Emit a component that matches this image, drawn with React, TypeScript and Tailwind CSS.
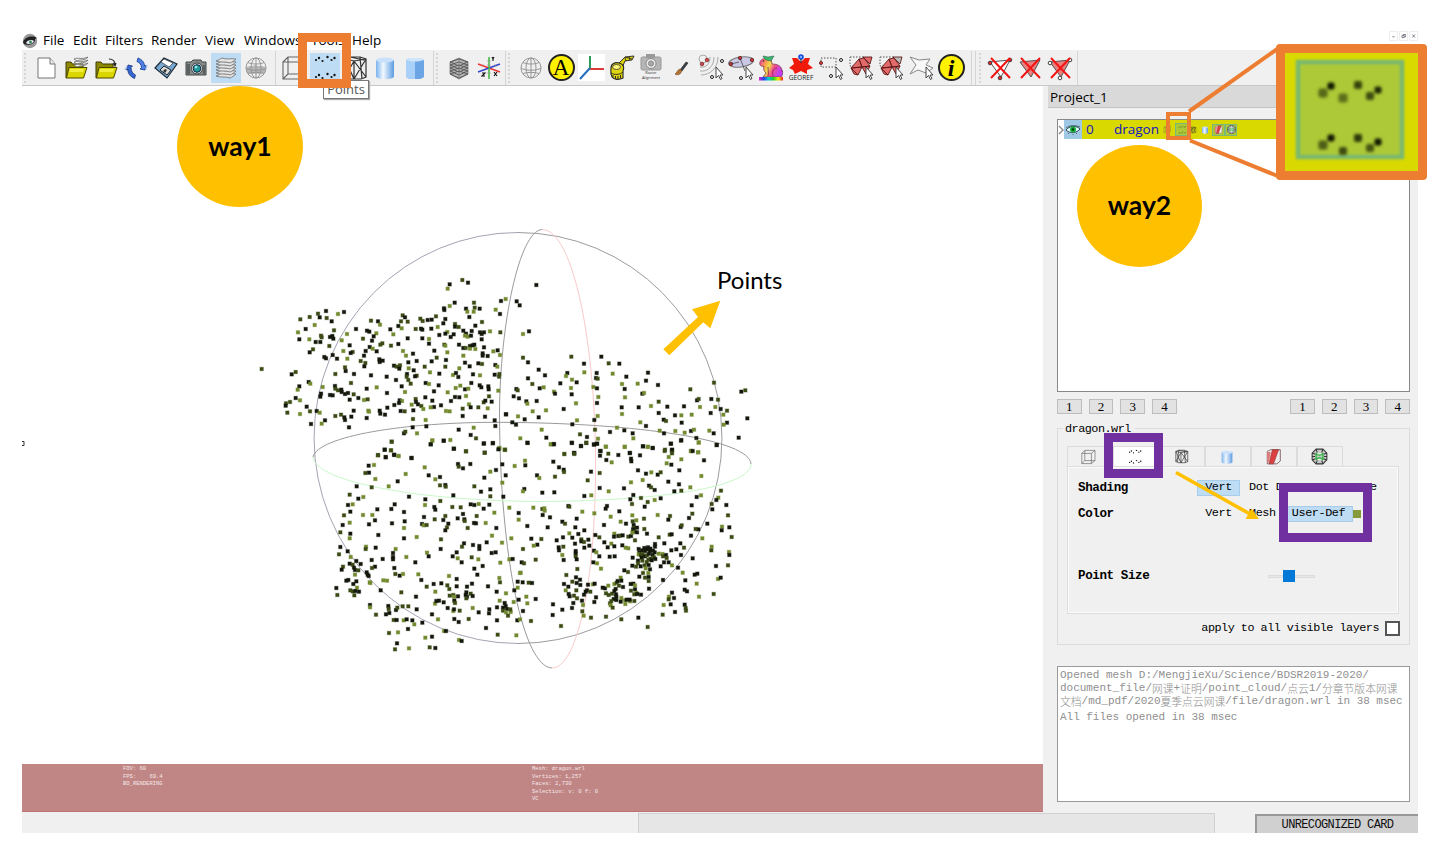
import React from "react";

const MONO = "font-['Liberation_Mono','Noto_Sans_CJK_SC',monospace]";
const UI = "font-['Open_Sans','Noto_Sans',sans-serif]";

/* ---------- point cloud ---------- */

type Patch = { x: number; y: number; pts: string };

// Every patch holds "x,y,shade" samples at a third of a pixel, relative to its corner.
const patches: Patch[] = [
  {
    x: 250,
    y: 220,
    pts: `637,180,1;599,193,0;654,188,0;593,206,2;614,248,0;599,258,2;582,265,0;583,270,0;672,248,1;648,266,0;674,263,1;689,266,0;652,275,2;671,275,2;753,243,0;767,237,2;737,269,2;750,282,0;658,291,0;
228,273,0;282,276,0;204,281,1;264,282,2;179,291,1;209,292,0;230,294,1;151,298,1;245,304,0;194,315,2;167,327,0;144,337,2;148,358,0;178,358,2;252,331,1;318,327,0;291,342,2;213,347,1;215,352,1;240,351,0;247,348,0;250,356,0;197,366,0;211,366,0;275,361,2;238,378,1;299,376,0;189,388,1;179,397,0;280,393,2;308,396,1;302,399,0;223,411,0;228,415,0;248,405,0;261,416,0;292,416,2;
363,302,1;384,304,0;390,314,2;351,332,0;358,335,0;379,340,2;371,349,0;339,356,1;366,362,0;359,381,0;368,386,2;380,394,0;347,393,0;397,370,1;391,374,1;423,377,1;445,372,0;342,407,0;332,423,1;346,429,1;343,439,0;388,418,0;389,426,0;398,422,0;
458,286,1;465,292,0;453,304,1;473,305,1;445,318,0;455,325,2;421,328,0;430,343,2;473,355,0;459,393,2;489,401,0;468,407,2;475,427,0;432,437,0;440,440,1;450,436,1;448,446,0;476,445,2;491,451,0;471,462,0;470,470,1;500,467,1;495,469,0;511,296,1;518,303,1;533,300,0;545,299,0;558,289,1;586,297,0;580,310,0;563,321,2;497,327,1;513,326,0;517,329,0;544,326,0;592,336,2;568,345,0;586,341,0;517,355,0;537,357,2;602,351,0;611,343,0;537,371,0;583,374,1;586,377,2;553,392,0;592,397,2;560,413,1;588,420,0;500,423,0;524,440,1;545,424,0;586,440,1;540,457,2;568,461,0;609,465,2;618,459,0;628,445,2;625,471,0;
615,312,1;615,320,0;626,321,1;640,332,0;648,341,0;645,347,2;653,350,2;663,347,0;665,333,0;676,317,0;696,306,1;690,337,0;702,337,0;695,342,0;720,334,2;751,337,1;695,358,0;627,374,0;640,384,0;647,384,1;660,378,0;660,386,2;668,376,0;673,374,0;676,387,2;702,382,0;640,407,2;698,400,0;698,407,0;713,408,0;730,394,2;743,391,0;750,405,2;645,428,0;685,430,0;696,432,1;659,439,0;736,435,0;742,440,2;669,463,0;690,466,2;734,464,0;748,462,1;747,470,1;
35,447,1;125,463,0;137,456,1;256,462,1;285,442,1;287,453,0;312,462,0;363,466,0;410,470,0;438,480,0;475,480,1;482,491,1;176,486,0;181,491,2;148,499,0;143,509,2;218,501,2;213,521,0;211,530,0;240,525,0;248,526,0;255,498,0;256,506,1;264,511,1;274,509,0;275,516,0;285,522,0;294,519,0;303,489,1;311,523,1;299,539,0;325,534,0;342,540,2;353,538,1;350,506,0;380,502,2;411,519,0;455,499,0;465,516,2;527,489,0;537,492,2;566,496,0;552,514,0;593,517,2;526,532,0;547,542,0;497,537,1;498,546,0;504,553,0;514,558,1;520,567,2;485,554,2;449,541,0;456,543,2;447,549,0;433,555,0;412,563,0;452,573,0;464,574,1;490,571,0;389,572,0;391,581,0;405,584,0;355,572,2;357,575,2;311,572,0;304,590,0;350,594,0;273,584,1;256,588,1;283,592,0;285,600,0;297,622,0;225,601,0;215,611,2;183,612,0;200,573,0;209,578,2;180,574,1;170,560,0;150,582,2;150,541,2;137,534,0;120,546,1;108,550,1;107,557,0;112,578,1;
617,504,2;631,497,2;645,508,0;655,506,2;664,489,0;689,496,0;694,502,0;715,499,0;716,508,0;745,512,2;717,529,1;648,528,2;615,531,0;628,532,0;603,543,0;573,556,0;552,561,0;542,562,2;588,573,2;599,574,2;638,566,1;638,588,0;657,553,2;662,562,0;685,562,1;701,547,1;706,542,0;725,545,0;713,565,2;705,590,0;734,601,0;736,618,0;768,583,0;489,597,1;527,600,2;488,622,0;529,619,0;501,640,2;462,640,0;466,635,1;626,629,0;671,623,2;662,645,0;678,655,1;
425,665,1;547,662,2;542,673,0;581,662,0;601,660,2;612,686,0;648,694,1;701,671,0;728,670,0;704,698,0;748,685,1;765,690,2;404,689,0;423,691,2;384,706,1;433,705,0;446,708,2;407,712,0;485,714,0`,
  },
  {
    x: 500,
    y: 220,
    pts: `109,195,0;50,244,0;59,256,0;87,334,0;69,342,2;69,413,1;84,427,0;116,449,0;135,466,0;84,475,0;97,492,1;131,502,2;119,505,0;181,490,0;49,507,0;53,511,1;41,529,0;57,535,0;79,544,0;82,551,2;110,543,0;162,515,2;165,521,0;214,410,1;304,410,0;252,431,0;326,430,1;358,431,0;253,457,2;290,459,0;288,474,0;293,476,1;202,459,0;198,468,2;216,479,2;230,487,0;213,504,2;215,523,0;338,461,2;379,470,0;366,492,2;374,507,0;375,532,2;280,501,2;291,505,0;295,531,2;291,549,0;228,550,2;191,567,0;138,571,2;98,574,2;116,592,0;74,598,0;54,589,2;18,583,0;37,607,0;48,614,0;125,629,2;217,613,0;231,601,2;283,600,0;293,588,2;285,629,1;330,636,0;351,623,2;373,631,0;398,640,0;400,655,2;365,562,0;366,582,2;416,562,0;421,607,2;438,618,0;444,458,0;438,482,0;413,491,2;474,495,0;427,521,0;432,519,2;476,545,1;453,558,2;502,560,0;476,579,0;525,586,0;491,599,0;498,603,1;544,586,2;552,559,0;575,584,2;545,608,0;479,632,2;492,640,0;526,633,2;554,638,2;573,633,0;582,629,2;544,660,0;589,654,0;571,508,1;591,541,0;596,537,1;600,561,2;634,537,0;654,539,1;642,488,1;646,561,2;632,579,0;662,567,0;681,572,1;670,584,2;681,608,0;671,614,2;628,632,2;641,640,0;724,515,0;736,511,1;742,595,0;716,653,0;240,643,1;261,651,0;294,656,2;139,653,0;61,655,2;
83,669,0;152,673,2;161,673,0;216,669,0;243,678,0;259,669,0;291,671,0;282,674,0;374,681,2;429,679,0;443,681,2;458,684,0;513,671,0;495,689,1;516,689,0;516,696,2;573,693,1;594,697,2;596,667,2;650,675,0;223,699,0;193,702,2;318,680,2;302,693,0;389,699,0;14,689,2`,
  },
  {
    x: 300,
    y: 440,
    pts: `275,5,1;392,13,0;397,1,2;431,2,0;254,29,0;273,31,1;282,44,0;295,48,2;257,51,0;234,45,1;334,54,0;206,77,0;222,75,2;196,99,1;207,98,0;226,117,2;293,124,0;317,102,2;170,139,0;215,142,1;266,139,2;149,164,1;175,176,0;190,171,2;327,170,0;374,82,2;386,106,0;406,118,2;420,111,0;420,136,1;436,135,0;437,140,1;474,72,0;476,80,1;489,85,0;511,72,0;498,34,1;461,26,0;552,10,0;579,9,0;598,24,2;615,29,1;595,28,0;554,38,1;607,73,0;588,90,0;571,95,2;553,113,0;617,106,0;607,128,2;644,78,2;523,139,1;543,155,0;571,148,0;571,169,1;610,170,0;460,166,0;376,178,0;375,195,2;421,183,1;284,193,0;274,207,0;232,208,0;158,193,2;144,195,0;151,215,0;132,226,1;189,225,2;217,225,2;225,241,0;207,253,0;149,248,2;128,255,0;121,277,1;151,281,0;149,295,2;235,285,0;276,250,0;312,216,0;314,244,0;312,264,2;312,295,0;350,291,2;372,231,0;366,252,0;371,256,2;380,255,1;403,201,0;406,209,0;404,238,1;430,240,0;436,228,1;445,251,0;441,262,1;436,271,0;457,201,1;482,202,1;489,222,0;473,235,0;493,238,0;494,243,1;503,264,1;512,193,0;523,195,0;536,192,2;568,194,0;551,206,0;530,228,1;522,249,0;528,250,0;557,249,2;583,218,2;628,203,2;656,219,0;656,239,2;589,264,0;576,287,2;606,308,2;634,295,2;560,307,0;519,315,0;538,318,0;538,327,0;492,310,0;486,320,1;423,298,1;422,327,0;381,338,2;386,349,0;458,349,0;470,337,0;473,355,2;485,367,0;515,352,1;535,358,2;575,339,0;587,337,0;628,358,2;638,357,0;601,368,2;548,378,0;523,386,0;532,404,0;346,367,0;319,351,2;287,327,2;279,339,0;279,351,0;279,358,0;283,384,0;248,357,0;227,323,0;198,320,2;197,327,1;215,360,0;121,321,0;117,343,1;143,334,0;152,351,2;149,371,0;158,374,1;169,363,0;182,372,0;162,383,0;165,390,0;175,391,1;129,380,1;125,389,0;165,404,2;200,397,0;203,404,0;206,408,0;225,380,0;216,384,1;209,427,2;211,429,2;145,420,0;139,422,0;160,432,0;169,424,0;171,443,2;151,451,1;158,454,1;166,453,0;177,455,0;163,466,1;109,444,0;112,465,1;250,421,2;261,422,2;286,402,1;299,407,0;309,402,2;242,451,0;304,457,1;348,470,0;355,403,2;364,420,0;380,440,1;401,432,0;424,430,0;406,455,2;447,408,2;470,417,0;442,436,1;448,447,1;470,439,0;501,440,0;516,431,0;564,439,0;598,414,2;600,427,1;590,455,0;618,460,2;643,451,0;653,425,0;660,399,2;653,443,2;449,467,1;460,465,1;462,470,2;474,469,0;499,457,0;497,465,0;501,470,0;499,475,1;512,461,1;518,468,0;463,482,0;465,489,1;443,504,0;460,513,2;462,508,0;479,512,1;405,491,2;409,483,0;417,482,0;431,487,0;396,523,0;414,538,2;463,537,0;476,546,0;506,537,1;518,504,2;536,517,0;568,508,0;567,520,0;591,502,0;599,482,2;614,489,0;609,503,0;617,498,0;621,507,0;609,512,1;618,517,2;632,516,2;624,527,1;631,508,1;641,486,2;656,479,0;591,541,0;652,541,0;660,538,2;558,564,0;593,584,1;649,586,2;210,495,0;210,502,2;228,524,1;258,523,0;265,498,0;266,507,1;268,519,0;281,540,1;290,540,0;288,510,0;292,503,1;308,499,1;325,499,1;350,508,0;311,541,2;320,538,0;337,541,0;343,553,2;367,548,0;324,567,0;267,579,1;294,577,2;291,610,0;285,628,1;327,625,2;376,593,2;396,590,0;389,622,1;406,624,0;432,573,2;438,573,0;477,600,2;485,603,0`,
  },
  {
    x: 520,
    y: 440,
    pts: `22,8,0;93,13,2;102,12,0;155,8,0;183,18,0;199,8,1;222,13,0;231,11,0;257,20,2;240,33,0;240,47,0;265,41,1;259,60,0;275,67,2;295,45,0;314,20,2;330,39,0;333,56,0;334,64,0;360,46,0;369,19,0;384,20,2;398,24,0;452,11,0;434,33,1;456,30,0;456,40,1;446,51,2;440,70,2;454,74,0;483,2,0;536,8,2;535,37,2;513,33,2;518,33,0;484,58,2;552,61,0;590,15,0;162,39,0;163,42,1;133,42,1;100,65,0;117,82,0;131,89,0;132,96,1;105,110,1;51,106,0;58,114,2;15,62,2;16,76,0;13,147,0;9,154,2;67,158,0;103,157,0;203,121,1;213,95,0;239,99,1;239,144,0;266,154,2;193,168,0;214,166,2;312,145,0;333,127,2;354,91,0;368,120,2;378,101,0;394,97,2;413,104,0;422,97,1;387,137,0;393,142,1;404,150,0;445,125,0;478,91,0;477,133,0;463,154,0;484,152,1;511,142,2;544,108,2;603,152,1;543,166,2;530,171,0;515,196,0;595,173,2;589,180,0;575,192,1;577,208,0;619,195,0;624,226,1;606,260,2;605,271,0;628,262,0;635,291,1;575,320,2;574,331,1;627,336,2;628,345,0;624,376,1;588,378,0;594,417,2;602,413,0;581,462,1;537,470,2;562,251,0;535,268,0;527,267,1;547,295,2;513,287,0;517,221,1;507,234,0;450,228,1;445,239,0;413,225,2;422,175,0;404,180,2;383,186,1;363,174,1;374,200,0;340,165,0;331,178,0;336,192,1;298,214,0;261,198,0;257,206,0;223,220,2;187,215,2;145,198,0;148,200,1;40,203,2;67,207,1;73,205,2;74,212,2;68,225,0;90,232,0;22,258,0;83,262,0;127,245,0;135,251,1;170,236,0;166,262,0;175,282,0;193,271,0;148,280,2;157,293,0;129,292,0;110,301,0;64,297,1;34,296,0;52,314,0;41,317,2;9,327,1;47,359,1;5,367,0;12,370,1;116,322,0;117,331,0;130,320,1;127,345,2;131,360,0;165,311,0;184,298,1;184,304,0;192,306,1;205,299,0;193,323,0;208,317,0;167,333,0;167,341,0;167,349,1;170,358,0;172,387,1;139,405,1;222,332,0;229,337,2;238,349,0;220,367,0;231,370,2;243,386,2;269,350,0;284,349,0;263,322,0;274,311,2;283,319,0;253,307,0;238,292,1;226,285,0;252,255,0;272,230,2;302,245,2;318,251,0;283,281,2;282,290,0;295,288,0;300,287,1;308,286,0;325,290,1;333,288,0;345,301,1;349,241,2;338,244,1;337,226,2;372,236,1;341,255,0;342,264,1;339,268,0;351,263,0;344,275,1;351,277,0;373,267,1;381,281,0;337,278,2;307,316,0;317,323,2;325,325,2;338,353,0;337,377,0;313,391,0;324,396,1;348,380,1;416,292,1;449,284,1;455,283,0;482,261,0;485,256,1;433,310,0;405,312,0;405,320,0;454,331,0;469,328,0;481,310,0;492,323,1;483,345,0;518,355,0;427,342,2;429,349,1;438,345,0;440,354,1;446,367,0;432,367,0;422,379,0;456,376,2;474,383,0;429,420,0;488,398,2;496,421,0;524,404,0;532,401,0;530,431,2;501,454,0;494,449,0;456,458,0;447,470,2;462,474,0;446,478,1;452,493,0;431,495,2;428,524,1;465,516,0;494,494,0;497,504,1;498,512,1;355,533,0;383,561,1;304,538,1;258,530,1;213,533,1;191,527,2;187,514,1;
356,327,0;358,338,0;366,331,0;373,324,0;375,333,0;381,328,0;384,322,0;390,333,0;391,326,0;399,332,0;404,337,0;356,343,2;362,345,1;368,342,1;375,349,0;381,346,1;387,341,0;398,345,0;402,352,1;406,357,0;392,356,1;385,359,1;395,361,0;380,366,1;354,362,0;365,353,0;367,362,1;354,370,1;362,379,0;374,376,1;386,375,0;377,385,2;390,388,0;369,399,1;385,399,2;375,413,1;386,411,0;386,423,1;358,410,0;387,446,0;416,341,2;
168,412,0;180,419,0;157,425,1;170,429,0;181,435,0;132,432,0;145,440,0;137,451,2;146,462,0;149,469,0;162,467,1;169,451,1;171,475,1;160,489,0;156,504,0;127,509,0;99,493,0;98,525,0;123,558,1;33,543,1;9,513,0;22,490,2;19,470,2;47,477,0;2,398,2;8,427,0;26,428,1;36,429,0;186,482,0;189,495,2;192,464,0;197,455,0;201,451,0;204,434,0;211,455,1;219,433,2;224,431,0;228,472,0;223,486,0;248,443,0;255,445,0;265,437,2;258,460,1;266,465,1;276,461,1;283,453,0;287,447,0;288,463,0;289,470,0;281,477,0;289,480,0;274,483,1;270,490,1;272,496,2;278,503,1;283,432,2;290,428,1;293,423,0;302,413,2;304,422,0;297,437,1;309,441,0;304,474,2;302,485,0;315,481,2;316,492,2;320,479,0;330,484,2;329,479,0;343,483,1;333,452,1;332,432,0;340,431,0;345,436,2;345,448,0;349,459,2;343,463,1;352,462,0;363,464,0`,
  },
];

const shades = ["#14180c", "#3c4a16", "#738a30"];

const cloud = patches.flatMap((p) =>
  p.pts
    .split(";")
    .map((s) => s.trim())
    .filter(Boolean)
    .map((s) => {
      const [x, y, c] = s.split(",").map(Number);
      return { x: p.x + x / 3, y: p.y + y / 3, c };
    })
);

// The viewport starts at (22, 86) in window coordinates, which the drawing keeps.
function Viewport() {
  return (
    <svg width="1021" height="678" viewBox="22 86 1021 678" className="block">
      <g fill="none" strokeWidth="1">
        <path d="M518 232.500A204 205.500 0 0 0 518 643.500" stroke="#a4a4b4" />
        <path d="M518 232.500A204 205.500 0 0 1 518 643.500" stroke="#9c9ca0" />
        <path d="M542 229.500C519 231 500 325 499.500 413C500 560 524 667 552 668" stroke="#9a9a9a" />
        <path d="M542 229.500C573 229 597 345 595.500 478C594 590 576 668 552 668" stroke="#fbc9c9" />
        <path d="M313 457C318 436 405 422 500 422.300C640 423 750 440 751 464" stroke="#9a9a9a" />
        <path d="M313 457C315 482 420 501 540 501.500C650 501 750 489 751 464" stroke="#c9f8c9" />
      </g>
      {cloud.map((p, i) => (
        <g key={i}>
          <rect x={p.x - 2.2} y={p.y - 2.2} width="4.400" height="4.400" fill={shades[p.c]} opacity="0.4" />
          <rect x={p.x - 1.7} y={p.y - 1.7} width="3.400" height="3.400" fill={shades[p.c]} />
        </g>
      ))}
      <path d="M22 441.500h2v4h-2" fill="none" stroke="#333" />
    </svg>
  );
}

/* ---------- icons ---------- */

type P = { children: React.ReactNode; s?: number };
const Svg = ({ children, s = 30 }: P) => (
  <svg width={s} height={s} viewBox="0 0 30 30" fill="none" className="block shrink-0">
    {children}
  </svg>
);

const NewDoc = () => (
  <Svg>
    <path d="M7 5h12l5 6v14H7z" fill="#fff" stroke="#777" />
    <path d="M19 5v6h5" fill="#e8e8e8" stroke="#777" />
  </Svg>
);
const folder = (
  <>
    <path d="M5 9h5l1.500 2H22v5L5 25z" fill="#8d8800" stroke="#3d3b00" />
    <path d="M5.500 25L8 14.500h18L22.500 25z" fill="#dcd600" stroke="#4a4700" />
    <path d="M9 16h14l-1 3H8z" fill="#f2ee40" />
  </>
);
const OpenProject = () => (
  <Svg>
    {folder}
    <g stroke="#666" strokeWidth=".8" fill="#f4f4f4">
      <path d="M13 12c4-2 8 1 14-2-3 4-8 2-11 4zM13 9c4-2 8 1 14-2-3 4-8 2-11 4zM13 6c4-2 8 1 14-2-3 4-8 2-11 4z" />
    </g>
  </Svg>
);
const Import = () => (
  <Svg>
    {folder}
    <path d="M18 6c4 0 6 2 6 6M22 10l2 3 1-3" stroke="#222" strokeWidth="1.200" />
  </Svg>
);
const Reload = () => (
  <Svg>
    <path d="M7 12l4.500 1-1.500 1.500c0 4 2 6 4.500 7.500l-1 3.500C9 23.500 6.500 20 7 16.500L5.500 17z" fill="#3568d0" stroke="#1a2f80" strokeWidth=".8" />
    <path d="M24 17l-5-1 1.500-1.500c0-3-2-5-4.500-6l1-3.500c4 1.500 6.500 4.500 6.500 8l1.500-.5z" fill="#4d80e0" stroke="#1a3fa0" strokeWidth=".9" />
    <path d="M6 13l-2 4M25 16l1-4" stroke="#a9c1ee" strokeWidth="1.500" />
  </Svg>
);
const Save = () => (
  <Svg>
    <path d="M4 15L13 5l13 6-10 14z" fill="#78a8d0" stroke="#1b2b3a" strokeWidth="1.200" />
    <path d="M10 9l3-3 9 4-4 4z" fill="#fff" stroke="#333" strokeWidth=".7" />
    <path d="M9 17l4-4 7 4-4 5z" fill="#ddd" stroke="#222" />
    <path d="M12 18l2-2 2 1-2 3z" fill="#333" />
  </Svg>
);
const Camera = () => (
  <Svg>
    <path d="M5 9h5l2-2h8l1 2h4v13H5z" fill="#858b8b" stroke="#444" />
    <path d="M6 11h3v10H6zM22 12h2v9h-2z" fill="#5a6060" />
    <circle cx="16" cy="15.500" r="5.500" fill="#d5dede" stroke="#444" />
    <circle cx="16" cy="15.500" r="3.800" fill="#219a98" stroke="#124" />
    <circle cx="15" cy="14" r="1.300" fill="#a5eeee" />
  </Svg>
);
const Layers = () => (
  <Svg>
    <g fill="#e6e6e6" stroke="#777" strokeWidth=".9">
      {[19, 16, 13, 10, 7, 4].map((y) => (
        <path key={y} d={`M5 ${y + 4}c3-1 4-2 6-3 4 2 9 0 14 1-2 2-4 3-6 4-5-2-9 0-14-2z`} />
      ))}
    </g>
  </Svg>
);
const Globe = ({ scene = false }: { scene?: boolean }) => (
  <Svg>
    {scene && <path d="M6 14c4-2 5 0 8-2 3 2 7 0 10 2v6c-4 1-14 1-18 0z" fill="#b5b5b5" />}
    <g stroke="#979797">
      <circle cx="15" cy="15" r="10" />
      <ellipse cx="15" cy="15" rx="5" ry="10" />
      <path d="M15 5v20M5 15c4 3 16 3 20 0M7 9.500c4 2 12 2 16 0M7 20.500c4-1.500 12-1.500 16 0" />
    </g>
  </Svg>
);
const Box = ({ s = 30 }: { s?: number }) => (
  <Svg s={s}>
    <path d="M3 9h16v17H3zM3 9l5-5h17v17l-6 5M19 9l6-5M8 4v17H25M8 21l-5 5" stroke="#666" strokeWidth="1.100" />
  </Svg>
);
const Dots = ({ s = 30 }: { s?: number }) => (
  <Svg s={s}>
    {[5, 22].map((y) => (
      <g key={y} fill="#111">
        <circle cx="6" cy={y + 2} r="1.100" />
        <circle cx="9" cy={y} r="1.200" />
        <circle cx="12.500" cy={y + 3} r="1.100" />
        <circle cx="17.500" cy={y - 1} r="1.200" />
        <circle cx="21.500" cy={y + 2} r="1.100" />
        <circle cx="24.500" cy={y} r="1.200" />
      </g>
    ))}
  </Svg>
);
const Wire = ({ s = 30 }: { s?: number }) => (
  <Svg s={s}>
    <path
      d="M5 6l5-2h10l6 2v18l-5 2H10l-5-2zM5 6l9 2 12-2M14 8v18M5 6l9 20M26 6L14 26M5 24L14 8l12 16M10 4l-2 21M20 4l2 22M10 4l14 3"
      stroke="#333"
      strokeWidth="1.200"
    />
  </Svg>
);
const Smooth = ({ s = 30 }: { s?: number }) => (
  <Svg s={s}>
    <defs>
      <linearGradient id="cyl">
        <stop offset="0" stopColor="#79b2ee" />
        <stop offset=".4" stopColor="#f2f8ff" />
        <stop offset="1" stopColor="#5c9ce2" />
      </linearGradient>
    </defs>
    <path d="M6 7v17c3 3 15 3 18 0V7z" fill="url(#cyl)" />
    <ellipse cx="15" cy="7" rx="9" ry="2.500" fill="#c9e1fb" />
  </Svg>
);
const Flat = () => (
  <Svg>
    <path d="M6 7l3-2h12l3 2v17l-4 2H9l-3-2z" fill="#8dbdf0" />
    <path d="M6 7h9v19H9l-3-2z" fill="#a9d0f8" />
    <path d="M15 8l9-1v17l-4 2h-5z" fill="#6ba5e6" />
    <path d="M6 7l3-2h12l3 2-6 1.500h-6z" fill="#cfe5fc" />
  </Svg>
);
const GridCube = () => (
  <Svg>
    <path d="M15 5l9 4v12l-9 5-9-5V9z" fill="#b5b5b5" stroke="#777" strokeWidth=".8" />
    <g stroke="#555" strokeWidth=".9">
      {[9, 12, 15, 18, 21].map((y) => (
        <path key={y} d={`M6 ${y}l9 4 9-4M6 ${y}l9-3 9 3`} />
      ))}
      <path d="M15 5v21M9 8v15M21 8v15" stroke="#777" strokeWidth=".7" />
    </g>
  </Svg>
);
const AxesXYZ = () => (
  <Svg>
    <path d="M4 11l22 8" stroke="#e33" strokeWidth="1.400" />
    <path d="M4 19l22-8" stroke="#34c" strokeWidth="1.400" />
    <path d="M15 4v22" stroke="#4b4" strokeWidth="1.600" />
    <path d="M13 8h4M13 12h4M13 20h4M9 11l-1 3M21 11l1 3" stroke="#999" strokeWidth=".7" />
    <path d="M18 4l1 2 1-2M19 6v2M20 19l3 4M23 19l-3 4M8 20h3l-3 3h3" stroke="#111" strokeWidth="1.100" />
  </Svg>
);
const Disc = ({ children, cls }: { children: string; cls: string }) => (
  <span className="flex h-[27px] w-[27px] items-center justify-center rounded-full border-2 border-[#222] bg-[#fff200]">
    <span className={cls}>{children}</span>
  </span>
);
const Axes = () => (
  <span className="block h-[27px] w-[27px] bg-white">
    <svg width="27" height="27" viewBox="0 0 27 27">
      <path d="M12 2v12" stroke="#299d58" strokeWidth="2" />
      <path d="M12 15h14" stroke="#df3a3a" strokeWidth="2" />
      <path d="M12 14L2 25" stroke="#246fc0" strokeWidth="2" />
    </svg>
  </span>
);
const Tape = () => (
  <Svg>
    <path d="M13 10l6-6 9-1-2 4-7 1-3 7z" fill="#d9cf10" stroke="#222" strokeWidth=".9" />
    <path d="M19 4l7 2M20 8l-1-3M24 7l-1-3" stroke="#222" strokeWidth=".8" />
    <path d="M5 15c0-5 5-6 8-5 4 1 6 4 4 8v7c-4 2-9 2-11-1-2-3-1-6-1-9z" fill="#e0d610" stroke="#222" strokeWidth="1.100" />
    <ellipse cx="10.500" cy="14" rx="4" ry="2.500" fill="#fff67a" stroke="#333" strokeWidth=".8" />
    <path d="M7 25v-3M9.500 26v-3M12 26v-3M14.500 25v-3M5 20c3 2 9 2 12-1" stroke="#222" strokeWidth=".9" />
  </Svg>
);
const RasterCamera = () => (
  <span className="flex flex-col items-center">
    <svg width="22" height="17" viewBox="0 0 22 17">
      <rect x="1" y="3" width="20" height="13" rx="1.500" fill="#b5b5b5" stroke="#999" />
      <rect x="6" y="0" width="9" height="4" fill="#9a9a9a" />
      <circle cx="11" cy="9.500" r="5" fill="#ececec" stroke="#888" />
      <circle cx="11" cy="9.500" r="2.600" fill="#aaa" stroke="#888" />
    </svg>
    <span className={`${UI} text-center text-[3.800px] leading-[4.800px] text-[#333]`}>
      Raster
      <br />
      Alignment
    </span>
  </span>
);
const Brush = () => (
  <Svg>
    <path d="M20 9l-6 8 2 1 6-8z" fill="#3b4048" stroke="#222" strokeWidth=".6" />
    <path d="M14 16l2 2-2 3c-2 1-4 1-5 0 2-1 2-4 5-5z" fill="#b27236" stroke="#7a4820" strokeWidth=".6" />
  </Svg>
);
const cursor = <path d="M20 14v11l2.500-2.500 2 4 1.500-1-2-3.500h3z" fill="#fff" stroke="#333" strokeWidth=".9" />;
const PickWaves = () => (
  <Svg>
    <g stroke="#aaa">
      <circle cx="7" cy="6" r="4" />
      <path d="M4 14c6 1 10-3 10-10M4 18c8 1 14-5 14-14M5 22c9 0 17-7 17-18" />
    </g>
    <g fill="#d44" stroke="#622" strokeWidth=".7">
      <circle cx="11" cy="7" r="1.800" />
      <circle cx="6" cy="11" r="1.800" />
    </g>
    <circle cx="26" cy="8" r="1.500" stroke="#222" />
    <circle cx="16" cy="24" r="1.500" stroke="#222" />
    {cursor}
  </Svg>
);
const PickDisk = () => (
  <Svg>
    <ellipse cx="15" cy="9" rx="12.500" ry="5" transform="rotate(-8 15 9)" fill="#c9c9e6" stroke="#777" />
    <g fill="#d33" stroke="#522" strokeWidth=".8">
      <circle cx="5" cy="11" r="1.700" />
      <circle cx="14" cy="5" r="1.700" />
      <circle cx="26" cy="7" r="1.700" />
    </g>
    <path d="M14 5l5 13M5 11l8-2" stroke="#333" strokeWidth=".7" />
    <circle cx="15" cy="25" r="1.500" stroke="#222" />
    {cursor}
  </Svg>
);
const Bunny = () => (
  <Svg>
    <defs>
      <linearGradient id="hue" x1="0" x2="1" y1="0" y2=".4">
        <stop offset="0" stopColor="#f02fc0" />
        <stop offset=".3" stopColor="#ff9a50" />
        <stop offset=".5" stopColor="#e8e04a" />
        <stop offset=".7" stopColor="#f4508a" />
        <stop offset="1" stopColor="#c040f0" />
      </linearGradient>
      <linearGradient id="bar">
        <stop offset="0" stopColor="#d2c" />
        <stop offset=".2" stopColor="#24e" />
        <stop offset=".4" stopColor="#0cc" />
        <stop offset=".6" stopColor="#2c2" />
        <stop offset=".8" stopColor="#ee0" />
        <stop offset="1" stopColor="#e22" />
      </linearGradient>
    </defs>
    <path d="M4 9c1-3 4-4 6-3l5-1 1 6c4 0 9 1 10 6 1 3 1 5-1 7H7l3-4c-2-2-3-4-2-7-3 1-5-1-4-4z" fill="url(#hue)" stroke="#7a3040" strokeWidth=".7" />
    <path d="M8 5l-1-2 5 1 6-1-3 5-5-1z" fill="#3fb56a" stroke="#265" strokeWidth=".6" />
    <circle cx="7.500" cy="8" r=".8" fill="#222" />
    <path d="M21 15c-4 0-5 4-4 8M12 14c0 4 1 6 0 9M25 17l2 2" stroke="#8a2050" strokeWidth=".8" />
    <rect x="3" y="24" width="24" height="3.500" fill="url(#bar)" />
  </Svg>
);
const Georef = () => (
  <span className="flex flex-col items-center">
    <svg width="26" height="21" viewBox="0 0 26 21">
      <path d="M4 4l5 0 4 4 4-4h5l-2 6 5 4-6 2 0 4-6-3-6 3-2-4-4-2 5-4z" fill="#f01a0a" />
      <circle cx="13" cy="3" r="2" fill="#7ab0ff" stroke="#1848d8" strokeWidth="1.600" />
      <path d="M13 5v4" stroke="#123" />
    </svg>
    <span className={`${UI} text-[6.600px] leading-[6px] text-[#222]`}>GEOREF</span>
  </span>
);
const SelVert = () => (
  <Svg>
    <path d="M5 5h15v9H5z" stroke="#555" strokeDasharray="1.500 1.500" />
    <circle cx="5" cy="10" r="1.600" fill="#d33" stroke="#522" strokeWidth=".8" />
    <circle cx="25" cy="7" r="1.500" stroke="#222" />
    <circle cx="15" cy="23" r="1.500" stroke="#222" />
    {cursor}
  </Svg>
);
const SelFace = ({ grey = false }: { grey?: boolean }) => (
  <Svg>
    <path d="M4 4h14v9H4z" stroke="#555" strokeDasharray="1.500 1.500" />
    <g fill="#e36a6a" stroke="#5c1818" strokeWidth=".9">
      <path d="M5 15l8-9 3 8zM13 6l5-1 6 8-8 1zM5 15l11-1-4 8zM16 14l8-1-4 8z" />
      <path d="M17 4h9l-2 7z" fill={grey ? "#bbb" : "#e36a6a"} />
      <path d="M5 15l3 6 4 1z" />
    </g>
    {cursor}
  </Svg>
);
const SelConn = () => (
  <Svg>
    <path d="M4 4l9 3 11-1-4 6 7 3-7 5-8-3-8 4 6-9z" fill="#f8f8f8" stroke="#888" />
    {cursor}
  </Svg>
);
const Del = ({ verts, face }: { verts: boolean; face: boolean }) => (
  <Svg>
    <path d="M5 9l20-2-9 17z" fill={face ? "#e98080" : "#fff"} stroke="#555" />
    {verts && (
      <g fill={face ? "#fff" : "#e22"} stroke="#333" strokeWidth=".9">
        <circle cx="5" cy="10" r="1.800" />
        <circle cx="25" cy="7" r="1.800" />
        <circle cx="15" cy="25" r="1.800" />
      </g>
    )}
    <path d="M6 5l19 20M25 5L6 25" stroke="#f31414" strokeWidth="2" />
  </Svg>
);
const Slab = ({ s = 17 }: { s?: number }) => (
  <Svg s={s}>
    <path d="M4 6l6-3h17v20l-6 5H4z" fill="#eee" stroke="#755" strokeWidth="1.500" />
    <path d="M13 3h11L15 28H7z" fill="#dc4040" stroke="#833" />
    <path d="M4 7h6l-3 18H4z" fill="#e07a7a" />
  </Svg>
);
const Ring = ({ s = 17 }: { s?: number }) => (
  <Svg s={s}>
    <path d="M9 2h12l7 7v12l-7 7H9l-7-7V9z" fill="#c9c9c9" stroke="#333" strokeWidth="1.800" />
    <path d="M9 2l2 6M21 2l-2 6M2 9l6 2M28 9l-6 2M2 21l6-2M28 21l-6-2M9 28l2-6M21 28l-2-6M2 15h5M28 15h-5" stroke="#333" strokeWidth="1.800" />
    <path d="M9 9c4 5 8 5 12 0M9 21c4-5 8-5 12 0M9 9v12M21 9v12" fill="#e6f6e6" stroke="#35b548" strokeWidth="2.400" />
  </Svg>
);
const Eye = () => (
  <svg width="16" height="17" viewBox="0 0 16 17">
    <path d="M1 9c3-4 10-5 14-1-3 4-10 5-14 1z" fill="#dff" stroke="#234" strokeWidth=".9" />
    <circle cx="8" cy="8.500" r="3" fill="#13b638" />
    <circle cx="8" cy="8.500" r="1.300" fill="#031" />
    <path d="M1 7c4-3 9-3 14-1M4 12l-1 1M8 13v1M11 12l1 1" stroke="#355" strokeWidth=".8" fill="none" />
  </svg>
);
const AppEye = () => (
  <svg width="16" height="16" viewBox="0 0 16 16">
    <circle cx="8" cy="8" r="7.200" fill="#999" />
    <path d="M1 9c2-5 9-7 14-4l-2 1c1 5-7 7-11 5z" fill="#222" />
    <path d="M4 10c1-3 6-4 8-2-1 3-6 4-8 2z" fill="#eef" />
    <circle cx="8.500" cy="9" r="1.500" fill="#3a8b55" />
  </svg>
);

/* ---------- chrome ---------- */

const Slot = ({ children, on }: { children: React.ReactNode; on?: boolean }) => (
  <div className={`flex h-[30px] w-[30px] items-center justify-center overflow-hidden ${on ? "bg-[#bedcf4]" : ""}`}>{children}</div>
);
const Sep = () => <div className="h-[34px] w-px bg-[#d5d5d5]" />;
const Grip = () => <div className="h-[30px] border-l-2 border-dotted border-[#d5d5d5]" />;

const menus = [
  ["File", "w-[30px]"],
  ["Edit", "w-[32px]"],
  ["Filters", "w-[46px]"],
  ["Render", "w-[54px]"],
  ["View", "w-[39px]"],
  ["Windows", "w-[67px]"],
  ["Tools", "w-[41px]"],
  ["Help", "w-[40px]"],
];

function Toolbar() {
  return (
    <div className="flex h-[36px] shrink-0 items-center border-b border-[#c8c8c8] bg-[#f0f0f0]">
      <div className="flex w-[9px] pl-[2px]"><Grip /></div>
      <Slot><NewDoc /></Slot>
      <Slot><OpenProject /></Slot>
      <Slot><Import /></Slot>
      <Slot><Reload /></Slot>
      <Slot><Save /></Slot>
      <Slot><Camera /></Slot>
      <Slot on><Layers /></Slot>
      <Slot><Globe scene /></Slot>
      <div className="flex w-[9px] pl-1"><Sep /></div>
      <Slot><Box /></Slot>
      <Slot on><Dots /></Slot>
      <Slot><Wire /></Slot>
      <Slot><Smooth /></Slot>
      <Slot><Flat /></Slot>
      <div className="flex w-[14px] items-center gap-[2px] pl-[3px]"><Sep /><Grip /></div>
      <Slot><GridCube /></Slot>
      <Slot><AxesXYZ /></Slot>
      <div className="flex w-[12px] items-center gap-[2px] pl-[1px]"><Sep /><Grip /></div>
      <Slot><Globe /></Slot>
      <Slot><Disc cls="font-['Liberation_Serif',serif] text-[23px] leading-[21px] font-medium text-black">A</Disc></Slot>
      <Slot><Axes /></Slot>
      <Slot><Tape /></Slot>
      <Slot><RasterCamera /></Slot>
      <Slot><Brush /></Slot>
      <Slot><PickWaves /></Slot>
      <Slot><PickDisk /></Slot>
      <Slot><Bunny /></Slot>
      <Slot><Georef /></Slot>
      <Slot><SelVert /></Slot>
      <Slot><SelFace /></Slot>
      <Slot><SelFace grey /></Slot>
      <Slot><SelConn /></Slot>
      <Slot><Disc cls="font-['Liberation_Serif',serif] text-[24px] leading-[22px] font-bold italic text-black">i</Disc></Slot>
      <div className="flex w-[19px] items-center gap-[3px] pl-[5px]"><Sep /><Sep /><Grip /></div>
      <Slot><Del verts face={false} /></Slot>
      <Slot><Del verts={false} face /></Slot>
      <Slot><Del verts face /></Slot>
      <div className="pl-[2px]"><Sep /></div>
    </div>
  );
}

const NumButtons = () => (
  <div className="flex gap-[7px]">
    {[1, 2, 3, 4].map((n) => (
      <div key={n} className="flex h-[15px] w-[24.700px] items-center justify-center border border-[#bdbdbd] bg-[#e2e2e2] font-['Liberation_Serif',serif] text-[13px] leading-[13px] text-black">
        {n}
      </div>
    ))}
  </div>
);

const tabs = [
  <Box s={18} />,
  <Dots s={18} />,
  <Wire s={17} />,
  <Smooth s={18} />,
  <Slab />,
  <Ring />,
];

const chip = "flex items-center justify-center border border-[#7ab87a] bg-[#adc937]";

function SidePanel() {
  return (
    <div className="flex w-[375px] flex-col bg-[#f0f0f0]">
      <div className={`ml-[5px] flex h-[22px] shrink-0 items-center border-b border-[#c4c4c4] bg-[#d9d9d9] pt-[2px] pl-[2px] ${UI} text-[13.500px] text-black`}>Project_1</div>
      <div className="mr-[8px] ml-[14px] mt-[11px] h-[273px] w-[353px] shrink-0 border border-[#888] bg-white">
        <div className="flex h-[19px] items-center bg-[#d9d900]">
          <div className="flex h-full w-[6px] items-center bg-white">
            <svg width="6" height="10" viewBox="0 0 6 10"><path d="M1 1l4 4-4 4" fill="none" stroke="#888" strokeWidth="1.400" /></svg>
          </div>
          <div className="mr-[4px] flex h-full w-[18px] items-center justify-center bg-[#9fc8e4]"><Eye /></div>
          <span className={`w-[28px] ${UI} text-[13.500px] text-[#1414c8]`}>0</span>
          <span className={`w-[49px] ${UI} text-[13.500px] text-[#1414c8]`}>dragon</span>
          <Box s={9} />
          <span className={`ml-[3px] h-[13px] w-[13px] ${chip}`}><Dots s={10} /></span>
          <span className="ml-px"><Wire s={8} /></span>
          <span className="ml-[3px]"><Smooth s={10} /></span>
          <span className={`ml-[2px] h-[12px] w-[13px] ${chip}`}><Slab s={9} /></span>
          <span className={`h-[12px] w-[12px] ${chip}`}><Ring s={9} /></span>
        </div>
      </div>
      <div className="mt-[7px] ml-[14px] flex w-[353px] justify-between">
        <NumButtons />
        <NumButtons />
      </div>
      <div className={`mt-[14px] ml-[14px] h-[217px] w-[353px] shrink-0 border border-[#dcdcdc] ${MONO} text-black`}>
        <div className="-mt-[7px] ml-[5px] h-[14px] w-[72px] bg-[#f0f0f0] pl-[2px] text-[11.800px] leading-[14px] tracking-[-0.500px]">dragon.wrl</div>
        <div className="mt-[10px] ml-[9px] flex h-[20px]">
          {tabs.map((t, i) => (
            <div key={i} className={`flex w-[46px] items-center justify-center border border-b-0 border-[#dcdcdc] pr-[2px] ${i === 1 ? "bg-white" : ""}`}>{t}</div>
          ))}
        </div>
        <div className="ml-[9px] h-[148px] w-[332px] border border-[#dcdcdc] px-[10px] pt-[12px] text-[11.800px] tracking-[-0.420px] shadow-[inset_0_0_0_1px_#fbfbfb]">
          <div className="flex h-[18px] items-center">
            <span className="w-[119px] text-[12.600px] font-semibold">Shading</span>
            <span className="flex h-[16px] w-[43px] items-center justify-center border border-[#a8cdea] bg-[#bedcf4]">Vert</span>
            <span className="ml-[9px] w-[101px] whitespace-nowrap">Dot Decorator</span>
            <span>None</span>
          </div>
          <div className="mt-[8px] flex h-[18px] items-center">
            <span className="w-[119px] text-[12.600px] font-semibold">Color</span>
            <span className="w-[43px] text-center">Vert</span>
            <span className="ml-[9px] w-[35px]">Mesh</span>
            <span className="flex h-[16px] w-[69px] items-center justify-center border border-[#a8cdea] bg-[#bedcf4]">User-Def</span>
            <span className="h-[8px] w-[8px] bg-[#869a3c]" />
          </div>
          <div className="mt-[43px] flex h-[20px] items-center">
            <span className="w-[190px] text-[12.600px] font-semibold">Point Size</span>
            <span className="flex h-[12px] w-[47px] items-center">
              <span className="h-[3px] w-[15px] border border-[#dcdcdc] bg-[#e8e8e8]" />
              <span className="h-[12px] w-[12px] bg-[#0078d7]" />
              <span className="h-[3px] w-[20px] border border-[#dcdcdc] bg-[#e8e8e8]" />
            </span>
          </div>
        </div>
        <div className="mt-[6px] flex items-center justify-end gap-[6px] pr-[9px] text-[11.800px] tracking-[-0.500px]">
          apply to all visible layers
          <span className="h-[15px] w-[15px] border-2 border-[#555] bg-white" />
        </div>
      </div>
      <div className={`mt-[21px] ml-[14px] h-[136px] w-[353px] shrink-0 overflow-hidden border border-[#9a9a9a] bg-white pt-[2px] pl-[2px] ${MONO} text-[11px] leading-[13px] tracking-[-0.030px] whitespace-nowrap text-[#8f8f8f]`}>
        <div className="h-[13px]">Opened mesh D:/MengjieXu/Science/BDSR2019-2020/</div>
        <div className="flex h-[13px]">document_file/<Cjk>网课</Cjk>+<Cjk>证明</Cjk>/point_cloud/<Cjk>点云</Cjk>1/<Cjk>分章节版本网课</Cjk></div>
        <div className="flex h-[13px] whitespace-pre"><Cjk>文档</Cjk>/md_pdf/2020<Cjk>夏季点云网课</Cjk>/file/dragon.wrl in 38 msec</div>
        <div className="mt-[3px] h-[13px]">All files opened in 38 msec</div>
      </div>
    </div>
  );
}

const Cjk = ({ children }: { children: string }) => (
  <span className="block h-[13px] font-['Noto_Sans_CJK_SC',sans-serif] text-[10.800px] leading-[13px] font-light tracking-normal">{children}</span>
);

const blobs = [
  [38, 33, 9, 0.55], [46, 26, 7, 1], [58, 38, 9, 0.5], [73, 25, 8, 0.75], [85, 36, 8, 0.7], [93, 30, 7, 0.9],
  [38, 85, 9, 0.6], [46, 78, 7, 1], [58, 91, 8, 0.7], [73, 78, 8, 0.8], [85, 88, 8, 0.65], [93, 82, 7, 1],
];

function Annotations() {
  return (
    <div className="pointer-events-none absolute inset-0">
      <div className={`absolute top-[80px] left-[323px] flex h-[19px] w-[46px] items-center justify-center border border-[#777] bg-white ${UI} text-[13px] text-[#555] shadow-[1px_1px_1px_#aaa]`}>Points</div>
      <div className="absolute top-[33px] left-[298px] h-[55px] w-[53px] border-[9px] border-[#ed7d31]" />
      <div className="absolute top-[86px] left-[177px] flex h-[121px] w-[126px] items-center justify-center rounded-[50%] bg-[#ffc000] font-['Lato',sans-serif] text-[26.500px] font-bold text-black">way1</div>
      <div className="absolute top-[145px] left-[1077px] flex h-[122px] w-[125px] items-center justify-center rounded-[50%] bg-[#ffc000] font-['Lato',sans-serif] text-[26.500px] font-bold text-black">way2</div>
      <div className="absolute top-[265px] left-[717px] font-['Lato',sans-serif] text-[24px] leading-[30px] text-black">Points</div>
      <div className="absolute top-[433px] left-[1104px] h-[45px] w-[59px] border-[9px] border-[#7030a0]" />
      <div className="absolute top-[483px] left-[1279px] h-[59px] w-[93px] border-[9px] border-[#7030a0]" />
      <svg className="absolute inset-0" width="1434" height="855" viewBox="0 0 1434 855">
        <path d="M663.300 349.300L698 317L692 309.300L720.300 300.700L710.300 328.300L703.300 322.300L669.300 355.300z" fill="#ffc000" />
        <path d="M1176 472.500L1250 514" stroke="#ffc000" strokeWidth="3.600" />
        <path d="M1259 519l-13.500 0 6-10.500z" fill="#ffc000" />
        <path d="M1189 111.500L1280 47M1190 140.500L1280 177" stroke="#ed7d31" strokeWidth="4" />
      </svg>
      <div className="absolute top-[112px] left-[1166px] h-[28px] w-[25px] border-4 border-[#ed7d31]" />
      <div className="absolute top-[44px] left-[1276px] h-[136px] w-[151px] rounded-[4px] border-[9px] border-[#ed7d31] bg-[#d9d900]">
        <svg width="133" height="118" viewBox="0 0 133 118" className="block">
          <rect x="13" y="9" width="104" height="95" fill="#adc937" stroke="#7ab970" strokeWidth="4.500" className="blur-[0.8px]" />
          <g fill="#101500" className="blur-[1.6px]">
            {blobs.map(([x, y, s, o], i) => (
              <rect key={i} x={x - s / 2} y={y - s / 2 + 7} width={s} height={s} rx="2" opacity={o} />
            ))}
          </g>
        </svg>
      </div>
    </div>
  );
}

export default function App() {
  return (
    <div className="relative flex h-[855px] w-[1434px] flex-col overflow-hidden bg-white pt-[30px] pl-[22px]">
      <div className="flex h-[803px] w-[1396px] flex-col">
        <div className={`flex h-[20px] shrink-0 items-center pt-px ${UI} text-[13.500px] text-black`}>
          <div className="w-[21px]"><AppEye /></div>
          {menus.map(([m, w]) => (
            <span key={m} className={`${w} whitespace-nowrap`}>{m}</span>
          ))}
          <div className="ml-auto flex gap-px self-start text-[#667]">
            {["M3 6h3", "M2.500 4.500h3v2.500h-3zM4 4.500V3h3v3H5.500", "M3 3l3.500 4M6.500 3L3 7"].map((d) => (
              <svg key={d} width="9" height="10" viewBox="0 0 9 10" className="border border-[#eee]">
                <path d={d} fill="none" stroke="currentColor" />
              </svg>
            ))}
          </div>
        </div>
        <Toolbar />
        <div className="flex h-[726px] shrink-0">
          <div className="flex w-[1021px] flex-col">
            <Viewport />
            <div className={`flex h-[48px] border-b border-[#c07070] bg-[#c08686] pt-px ${MONO} text-[5.500px] leading-[7.600px] whitespace-pre text-[#f6e8e8]`}>
              <div className="w-[409px] pl-[101px]">{"FOV: 60\nFPS:    69.4\nBO_RENDERING"}</div>
              <div className="pl-[101px]">{"Mesh: dragon.wrl\nVertices: 1,257\nFaces: 2,730\nSelection: v: 0 f: 0\nVC"}</div>
            </div>
          </div>
          <SidePanel />
        </div>
        <div className="flex h-[21px] shrink-0 items-end bg-[#f0f0f0] pl-[616px]">
          <div className="h-[20px] w-[577px] border border-b-0 border-[#d0d0d0] bg-[#e6e6e6]" />
          <div className={`ml-[40px] flex h-[19px] flex-1 items-center justify-center border-t-2 border-l-2 border-[#999] bg-[#d0d0d0] ${MONO} text-[12px] tracking-[-0.620px] text-[#111]`}>UNRECOGNIZED CARD</div>
        </div>
      </div>
      <Annotations />
    </div>
  );
}
